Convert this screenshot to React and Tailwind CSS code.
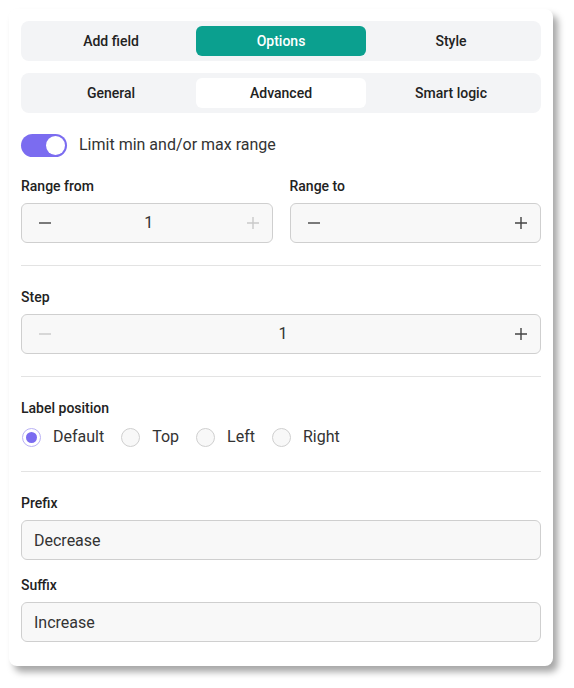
import React, { useState } from "react";

const Minus = ({ disabled }) => (
  <svg width="14" height="14" viewBox="0 0 14 14" className={disabled ? "text-[#c9c9c9]" : "text-[#444]"}>
    <path d="M1 7h12" stroke="currentColor" strokeWidth="1.4" />
  </svg>
);

const Plus = ({ disabled }) => (
  <svg width="14" height="14" viewBox="0 0 14 14" className={disabled ? "text-[#c9c9c9]" : "text-[#444]"}>
    <path d="M1 7h12M7 1v12" stroke="currentColor" strokeWidth="1.4" />
  </svg>
);

const Stepper = ({ value, minDisabled, maxDisabled }) => (
  <div className="flex items-center h-[40px] rounded-md border border-[#cfcfcf] bg-[#f8f8f8] pl-4 pr-3">
    <button className="flex items-center justify-center w-[14px]">
      <Minus disabled={minDisabled} />
    </button>
    <div className="flex-1 text-center text-[16px] text-[#333]">{value}</div>
    <button className="flex items-center justify-center w-[14px]">
      <Plus disabled={maxDisabled} />
    </button>
  </div>
);

const Tabs = ({ items, active, activeClass, className }) => (
  <div className={"flex h-[40px] rounded-lg bg-[#f3f4f6] p-[5px] " + (className || "")}>
    {items.map((item) => (
      <button
        key={item}
        className={
          "flex-1 rounded-md text-[14px] leading-[29px] font-medium " +
          (item === active ? activeClass : "text-[#222]")
        }
      >
        {item}
      </button>
    ))}
  </div>
);

const Label = ({ children, className }) => (
  <div className={"text-[14px] leading-[20px] font-medium text-[#222] " + (className || "")}>{children}</div>
);

export default function App() {
  const [position, setPosition] = useState("Default");
  const [limit, setLimit] = useState(true);

  return (
    <div className="min-h-screen bg-white pt-[9px] pl-[9px]" style={{ fontFamily: "Roboto, 'Noto Sans', sans-serif" }}>
      <div className="w-[544px] rounded-lg bg-white px-3 pt-3 pb-6 shadow-[5px_6px_7px_rgba(0,0,0,0.35)]">
        <Tabs items={["Add field", "Options", "Style"]} active="Options" activeClass="bg-[#0ba08f] text-white" />
        <Tabs
          items={["General", "Advanced", "Smart logic"]}
          active="Advanced"
          activeClass="bg-white text-[#222]"
          className="mt-3"
        />

        <div className="mt-5 flex items-center gap-3 h-[24px]">
          <button
            onClick={() => setLimit(!limit)}
            className={"relative w-[46px] h-[23px] rounded-full " + (limit ? "bg-[#7b6cf0]" : "bg-[#ccc]")}
          >
            <span
              className={
                "absolute top-[2px] w-[19px] h-[19px] rounded-full bg-white " + (limit ? "right-[2px]" : "left-[2px]")
              }
            />
          </button>
          <span className="text-[16px] text-[#333]">Limit min and/or max range</span>
        </div>

        <div className="mt-[19px] grid grid-cols-2 gap-x-[17px]">
          <div>
            <Label className="mb-[7px]">Range from</Label>
            <Stepper value="1" maxDisabled />
          </div>
          <div>
            <Label className="mb-[7px]">Range to</Label>
            <Stepper value="" />
          </div>
        </div>

        <div className="mt-[22px] h-px bg-[#e3e3e3]" />

        <Label className="mt-[21px] mb-[7px]">Step</Label>
        <Stepper value="1" minDisabled />

        <div className="mt-[22px] h-px bg-[#e3e3e3]" />

        <Label className="mt-[21px]">Label position</Label>
        <div className="mt-[7px] flex items-center h-[24px]">
          {["Default", "Top", "Left", "Right"].map((opt) => (
            <label key={opt} className="flex items-center mr-4 cursor-pointer" onClick={() => setPosition(opt)}>
              <span
                className={
                  "flex items-center justify-center w-[19px] h-[19px] rounded-full border bg-[#f8f8f8] ml-px " +
                  (position === opt ? "border-[#b9b1f5] bg-white" : "border-[#cfcfcf]")
                }
              >
                {position === opt && <span className="w-[11px] h-[11px] rounded-full bg-[#7b6cf0]" />}
              </span>
              <span className="ml-3 text-[16px] text-[#333]">{opt}</span>
            </label>
          ))}
        </div>

        <div className="mt-[22px] h-px bg-[#e3e3e3]" />

        <Label className="mt-[21px] mb-[7px]">Prefix</Label>
        <input
          defaultValue="Decrease"
          className="w-full h-[40px] rounded-md border border-[#cfcfcf] bg-[#f8f8f8] px-3 text-[16px] text-[#333] outline-none"
        />

        <Label className="mt-[15px] mb-[7px]">Suffix</Label>
        <input
          defaultValue="Increase"
          className="w-full h-[40px] rounded-md border border-[#cfcfcf] bg-[#f8f8f8] px-3 text-[16px] text-[#333] outline-none"
        />
      </div>
    </div>
  );
}
